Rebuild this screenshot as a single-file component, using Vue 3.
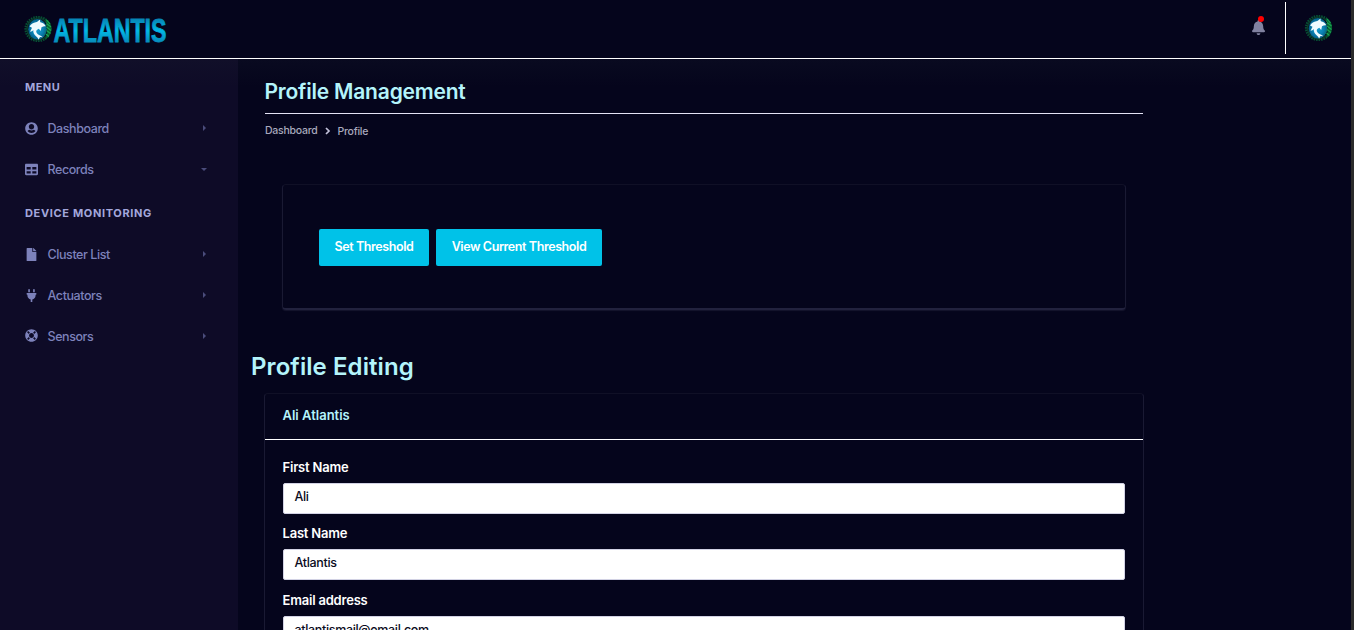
<script setup>
const groups = [
  {
    title: 'Menu',
    items: [
      { label: 'Dashboard', icon: 'user', caret: 'right' },
      { label: 'Records', icon: 'table', caret: 'down' },
    ],
  },
  {
    title: 'Device Monitoring',
    items: [
      { label: 'Cluster List', icon: 'file', caret: 'right' },
      { label: 'Actuators', icon: 'plug', caret: 'right' },
      { label: 'Sensors', icon: 'ring', caret: 'right' },
    ],
  },
]
const icons = {
  user: { box: '0 0 496 512', d: 'M248 8C111 8 0 119 0 256s111 248 248 248 248-111 248-248S385 8 248 8zm0 72c60 0 106 46 106 106s-46 110-106 110-106-50-106-110S188 80 248 80zm0 350c-65 0-122-28-158-74 18-30 42-46 76-52 22 20 50 30 82 30s60-10 82-30c34 6 58 22 76 52-36 46-93 74-158 74z' },
  table: { box: '0 0 512 512', d: 'M464 32H48C21 32 0 53 0 80v352c0 27 21 48 48 48h416c27 0 48-21 48-48V80c0-27-21-48-48-48zM224 416H64v-96h160v96zm0-160H64v-96h160v96zm224 160H288v-96h160v96zm0-160H288v-96h160v96z' },
  file: { box: '-64 0 512 512', d: 'M224 136V0H24C11 0 0 11 0 24v464c0 13 11 24 24 24h336c13 0 24-11 24-24V160H248c-13 0-24-11-24-24zm160-14v6H256V0h6c6 0 12 3 17 7l98 98c4 4 7 10 7 17z' },
  plug: { box: '-64 0 512 512', d: 'M320 32a32 32 0 0 0-64 0v96h64zm48 128H16c-9 0-16 7-16 16v32c0 9 7 16 16 16h16v32c0 77 55 142 128 157v99h64v-99c73-15 128-80 128-157v-32h16c9 0 16-7 16-16v-32c0-9-7-16-16-16zM128 32a32 32 0 0 0-64 0v96h64z' },
  ring: { box: '0 0 512 512', d: 'M256 8C119 8 8 119 8 256s111 248 248 248 248-111 248-248S393 8 256 8zm174 119l-68 68c-11-19-26-35-45-45l68-68c17 12 33 28 45 45zM256 352c-53 0-96-43-96-96s43-96 96-96 96 43 96 96-43 96-96 96zM127 82l68 68c-19 11-35 26-45 45l-68-68c12-17 28-33 45-45zM82 385l68-68c11 19 26 35 45 45l-68 68c-17-12-33-28-45-45zm303 45l-68-68c19-11 35-26 45-45l68 68c-12 17-28 33-45 45z' },
}
const fields = [
  { label: 'First Name', value: 'Ali' },
  { label: 'Last Name', value: 'Atlantis' },
  { label: 'Email address', value: 'atlantismail@email.com' },
]
</script>

<template>
  <div class="page">
    <svg width="0" height="0" class="defs">
      <defs>
        <radialGradient id="globe"><stop offset="0" stop-color="#1c9fd0" /><stop offset=".6" stop-color="#0a83b4" /><stop offset="1" stop-color="#06608a" /></radialGradient>
        <symbol id="emblem" viewBox="0 0 30 30">
          <ellipse cx="14.500" cy="15" rx="12" ry="11.500" fill="none" stroke="#075034" stroke-width="3.200" stroke-dasharray="1.500 .9" />
          <ellipse cx="14.500" cy="15" rx="11" ry="11" fill="none" stroke="#0a3d2a" stroke-width="1.200" />
          <path d="M22 4.500q5.500 3.500 6 9.500T21.500 26q2.500-5 2.200-11T22 4.500z" fill="#076330" />
          <path d="M23 6l3.500 4M23 9.500l4.500 3.500M23 13l4.500 3.500M23 16.500l4 3M22.500 20l3 2.500" stroke="#1aa652" stroke-width="1.100" fill="none" />
          <ellipse cx="14" cy="15.300" rx="9.300" ry="10.200" fill="url(#globe)" />
          <path d="M6 12.500c1.500-2.500 4-3.800 6.300-4.200 1.500-.3 2.700-1.700 4.400-2.800-.2 1.300-.2 2.200.2 2.800 2.300.4 4.300 1.800 5.400 4-1.700-.2-3 .2-4.300 1l-.8 3.700-1.900-2.300c-2 .7-3 2-2.400 3.500.5 1.500 2 2.800 4.300 3.500l2.300 1.500-3-.1-1.500 2.600c-.3-1.400-1-2.300-2.200-3.200C10.500 20.700 9.500 18.300 9.800 16 9 17 8 17.500 6.500 17.700c.7-1.300 1.500-2.600 2-4z" fill="#effbff" />
          <path d="M22.500 7.500q1.500 8-2 14.500" stroke="#0d8b5a" stroke-width=".9" stroke-dasharray="1.500 1" fill="none" />
        </symbol>
      </defs>
    </svg>

    <header class="topbar">
      <svg class="logo" width="160" height="40" viewBox="0 0 160 40">
        <defs>
          <linearGradient id="word" x1="0" y1="0" x2="0" y2="1"><stop offset="0.2" stop-color="#0684b4" /><stop offset=".52" stop-color="#02b8e6" /><stop offset=".8" stop-color="#068fbe" /></linearGradient>
        </defs>
        <use href="#emblem" x="0" y="3" width="31" height="30" />
        <text x="30.500" y="30.500" textLength="113" lengthAdjust="spacingAndGlyphs" class="word">ATLANTIS</text>
      </svg>
      <div class="tools">
        <div class="bell">
          <svg width="13" height="15" viewBox="0 0 448 512" preserveAspectRatio="none"><path fill="#8182a0" d="M224 512c35 0 64-29 64-64H160c0 35 29 64 64 64zm215-150c-19-21-55-52-55-154 0-78-55-140-128-155V32a32 32 0 0 0-64 0v21C119 68 64 130 64 208c0 102-36 133-55 154-6 6-9 14-9 22 0 16 13 32 32 32h384c19 0 32-16 32-32 0-8-3-16-9-22z" /></svg>
          <i class="dot"></i>
        </div>
        <div class="divider"></div>
        <svg class="avatar" width="30" height="30"><use href="#emblem" width="30" height="30" /></svg>
      </div>
    </header>

    <div class="body">
      <nav class="sidebar">
        <section v-for="g in groups" :key="g.title" class="group">
          <h6>{{ g.title }}</h6>
          <a v-for="it in g.items" :key="it.label" class="item">
            <svg width="13" height="13" :viewBox="icons[it.icon].box"><path fill="currentColor" fill-rule="evenodd" :d="icons[it.icon].d" /></svg>
            <span class="name">{{ it.label }}</span>
            <i :class="['caret', it.caret]"></i>
          </a>
        </section>
      </nav>

      <main class="content">
        <h2>Profile Management</h2>
        <div class="crumbs">
          <span>Dashboard</span>
          <svg width="6" height="8" viewBox="0 0 6 8"><path d="M1 1l3 3-3 3" fill="none" stroke="#c3c2da" stroke-width="1.700" /></svg>
          <span class="current">Profile</span>
        </div>
        <div class="card actions">
          <button class="set">Set Threshold</button>
          <button class="view">View Current Threshold</button>
        </div>
        <h1>Profile Editing</h1>
        <div class="card form">
          <h5>Ali Atlantis</h5>
          <div class="fields">
            <div v-for="f in fields" :key="f.label" class="field">
              <label>{{ f.label }}</label>
              <div class="input">{{ f.value }}</div>
            </div>
          </div>
        </div>
      </main>
    </div>
    <div class="scrollbar"></div>
  </div>
</template>

<style>
html, body { margin: 0; overflow: hidden; background: #05051c; }
</style>

<style scoped>
* { box-sizing: border-box; }
.page { position: relative; width: 1354px; height: 630px; overflow: hidden; background: #05051c; font-family: Inter, "Liberation Sans", sans-serif; display: flex; flex-direction: column; padding-right: 3px; }
.defs { position: absolute; }
.scrollbar { position: absolute; right: 0; top: 0; width: 3px; height: 630px; background: #2b2b2b; }
.topbar { flex: none; height: 59px; border-bottom: 1px solid #fff; display: flex; justify-content: space-between; padding-left: 23px; }
.logo { margin-top: 11px; overflow: visible; }
.word { font: bold 33px "Liberation Sans Narrow", "Liberation Sans", sans-serif; fill: url(#word); stroke: url(#word); stroke-width: .8; }
.tools { display: flex; }
.bell { position: relative; margin: 19px 20.500px 0 0; height: 20px; width: 13px; }
.dot { position: absolute; left: 6.500px; top: -3px; width: 6px; height: 6px; border-radius: 50%; background: #f00; }
.divider { width: 1px; height: 52px; margin-top: 2px; background: #fff; }
.avatar { margin: 13px 17px 0 18px; }
.body { flex: 1; display: flex; min-height: 0; background: linear-gradient(#090a20, #05051c 28px); }
.sidebar { flex: none; width: 238px; background: linear-gradient(#110f29, #0e0b27 28px); padding: 18px 25px 0; }
h6 { margin: 0; font-size: 11px; line-height: 20px; height: 31px; font-weight: 700; text-transform: uppercase; color: #a3a7dc; letter-spacing: .65px; white-space: nowrap; }
.group:first-child h6 { letter-spacing: .45px; }
.group { height: 126px; }
.item { display: flex; align-items: center; height: 40.750px; color: #7d82bb; font-size: 12.500px; font-weight: 500; }
.name { margin: .5px 0 0 9.500px; flex: 1; letter-spacing: -.42px; }
.caret { width: 0; height: 0; border: 3px solid transparent; opacity: .7; }
.caret.right { border-left-color: #6468a0; border-right: 0; margin-right: 7px; }
.caret.down { border-top-color: #6468a0; border-bottom: 0; margin-right: 6px; }
.content { flex: none; width: 905px; padding-left: 27px; color: #fff; }
h2 { margin: 0; height: 55px; border-bottom: 1px solid #e4e3f5; font-size: 21px; font-weight: 600; line-height: 65px; letter-spacing: -.2px; text-indent: -.5px; color: #b4f4fb; }
h1 { margin: 37px 0 0 -14px; height: 40px; line-height: 40px; font-size: 24px; font-weight: 600; letter-spacing: .08px; color: #b4f4fb; }
.crumbs { display: flex; align-items: center; height: 34px; padding-bottom: 2px; font-size: 10.500px; font-weight: 500; letter-spacing: -.25px; color: #a9a9bd; }
.crumbs svg { margin: 2px 7px 0; }
.current { margin-top: 2px; }
.card { border: 1px solid #101026; border-radius: 4px; border-left-color: #1a1a33; border-right-color: #1a1a33; }
.actions { width: 844px; height: 126px; margin: 36px 0 0 17px; border-bottom: 2px solid #22223e; box-shadow: 0 1px 1px #16162e; padding: 44px 36px; display: flex; gap: 7px; }
button { height: 37px; border: 0; border-radius: 2px; padding: 0 0 2px; background: #00c2e8; color: #fff; font: 600 12.500px Inter, sans-serif; letter-spacing: -.41px; white-space: nowrap; }
.set { width: 110px; }
.view { width: 166px; }
.form { width: 880px; height: 300px; margin: 6px 0 0 -1px; }
h5 { margin: 0; height: 46px; border-bottom: 1px solid #fff; padding-left: 17.500px; font-size: 13px; font-weight: 600; line-height: 43px; letter-spacing: 0; color: #b4f4fb; }
.fields { padding: 16px 18px; }
.field { height: 66.400px; }
label { display: block; height: 27px; font-size: 13px; font-weight: 600; line-height: 22.400px; letter-spacing: -.2px; text-indent: -.5px; }
.input { height: 31px; background: #fff; border: 1px solid #d2d2e4; border-radius: 2px; color: #0b0b1c; padding-left: 10.500px; font-size: 12.500px; line-height: 26.400px; font-weight: 500; letter-spacing: -.33px; }
</style>
